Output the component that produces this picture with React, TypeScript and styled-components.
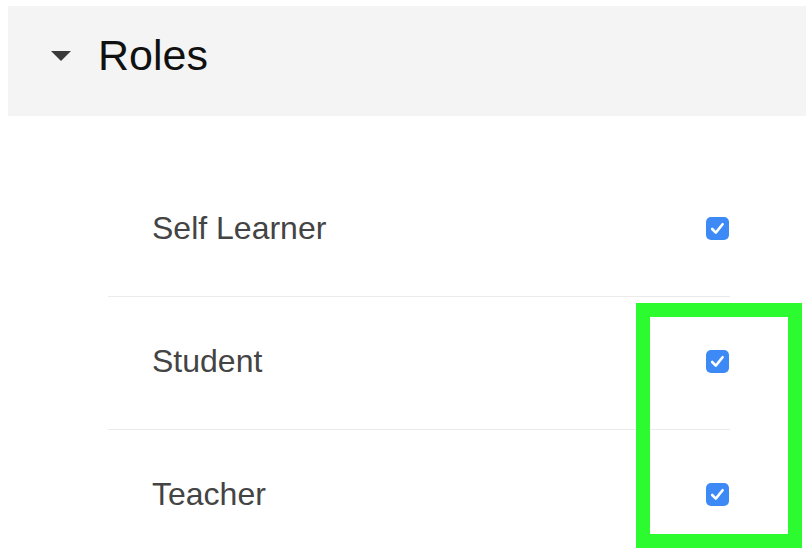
import React from "react";
import styled, { createGlobalStyle } from "styled-components";

const Global = createGlobalStyle`
  html, body { margin: 0; padding: 0; background: #ffffff; overflow: hidden; }
  body { font-family: "Liberation Sans", Arial, sans-serif; }
`;

const Page = styled.div`
  position: relative;
  width: 806px;
  height: 552px;
  padding: 6px 0 0 8px;
  box-sizing: border-box;
`;

const Header = styled.div`
  height: 110px;
  box-sizing: border-box;
  background: #f4f4f4;
  display: flex;
  align-items: center;
  padding-left: 43px;
  padding-bottom: 12px;
  gap: 27px;
`;

const Caret = styled.span`
  width: 0;
  height: 0;
  border-left: 10px solid transparent;
  border-right: 10px solid transparent;
  border-top: 10px solid #3a3a3a;
  margin-top: 2px;
`;

const Title = styled.h2`
  margin: 0;
  font-size: 43px;
  font-weight: 400;
  color: #111111;
  line-height: 1;
`;

const List = styled.div`
  margin: 48px 0 0 100px;
  width: 622px;
  display: flex;
  flex-direction: column;
`;

const Row = styled.div`
  height: 132px;
  display: flex;
  align-items: center;
  justify-content: space-between;
  padding-left: 44px;
  padding-right: 1px;
  border-bottom: 1.5px solid #ebebeb;
`;

const Label = styled.span`
  font-size: 32px;
  color: #444444;
  margin-top: -3px;
`;

const Box = styled.span`
  width: 23px;
  height: 23px;
  flex: none;
  border-radius: 5px;
  background: #3d8af7;
  display: flex;
  align-items: center;
  justify-content: center;
  margin-top: -3px;
`;

const Highlight = styled.div`
  position: absolute;
  left: 636px;
  top: 303px;
  width: 166px;
  height: 245px;
  box-sizing: border-box;
  border: 14px solid #2bfb2f;
`;

const Check = () => (
  <Box>
    <svg width="23" height="23" viewBox="0 0 23 23" style={{ display: "block" }}>
      <path d="M6.2 12 L9.8 15.6 L16.6 7.2" fill="none" stroke="#ffffff" strokeWidth="2.6" strokeLinecap="round" strokeLinejoin="round" />
    </svg>
  </Box>
);

const roles = ["Self Learner", "Student", "Teacher"];

export default function App() {
  return (
    <Page>
      <Global />
      <Header>
        <Caret />
        <Title>Roles</Title>
      </Header>
      <List>
        {roles.map((r) => (
          <Row key={r}>
            <Label>{r}</Label>
            <Check />
          </Row>
        ))}
      </List>
      <Highlight />
    </Page>
  );
}
